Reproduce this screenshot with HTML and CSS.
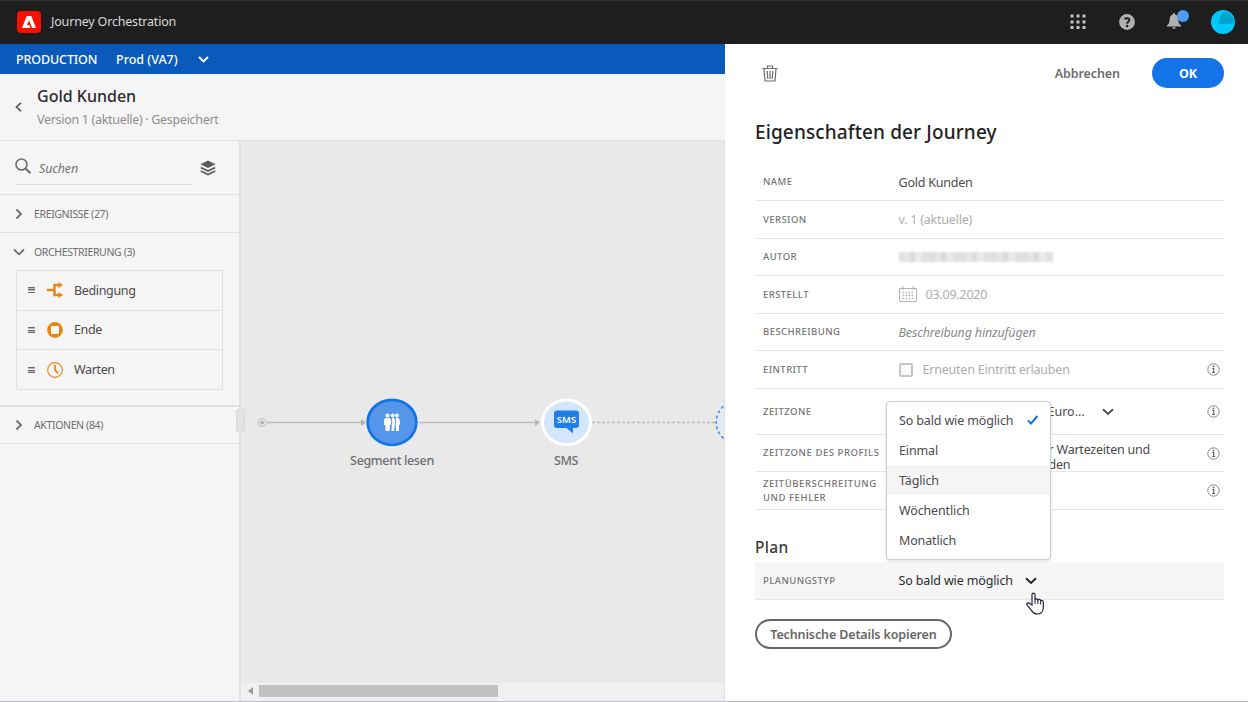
FILE: index.html
```html
<!DOCTYPE html>
<html lang="de">
<head>
<meta charset="utf-8">
<title>Journey Orchestration</title>
<link rel="stylesheet" href="styles.css">
</head>
<body>
<div class="app">
  <header class="topbar">
    <svg class="logo" width="24" height="22" viewBox="0 0 24 22"><rect width="24" height="22" rx="4" fill="#fa0f00"/><path d="M9.700 5h4.600l4.700 12h-3.900L12 9.200l-2 4.900h2.300l1.100 2.900H5z" fill="#fff"/></svg>
    <span class="product">Journey Orchestration</span>
    <div class="tools">
      <svg class="t-apps" width="16" height="16" viewBox="0 0 16 16" fill="#c4c4c4"><path d="M.5.5h3v3h-3zM6.500.5h3v3h-3zM12.500.5h3v3h-3zM.5 6.500h3v3h-3zM6.500 6.500h3v3h-3zM12.500 6.500h3v3h-3zM.5 12h3v3h-3zM6.500 12h3v3h-3zM12.500 12h3v3h-3z"/></svg>
      <svg class="t-help" width="16" height="16" viewBox="0 0 16 16"><circle cx="8" cy="8" r="7.900" fill="#b1b1b1"/><path d="M5.500 5.200C6.300 4 10.400 3.500 10.400 6c0 1.900-2.300 1.800-2.300 3.800" fill="none" stroke="#1e1e1e" stroke-width="1.900"/><circle cx="8.100" cy="12" r="1.200" fill="#1e1e1e"/></svg>
      <svg class="t-bell" width="24" height="22" viewBox="0 0 24 22"><path d="M1 17.500v-1.200c2.200-1.300 2.600-3 2.700-6.200C3.800 7.500 5 6 7 5.500V4.300h2v1.200c2 .5 3.200 2 3.300 4.600.1 3.200.5 4.900 2.700 6.200v1.200zM6.200 18.300h3.600c-.3 2-3.300 2-3.600 0z" fill="#b1b1b1"/><circle cx="17" cy="7" r="6" fill="#4b9cf5"/></svg>
      <svg class="t-avatar" width="24" height="24" viewBox="0 0 24 24"><circle cx="12" cy="12" r="12" fill="#00c8ff"/><path d="M13 1.800c6 .5 10.500 5.500 10.900 11.700L6.500 14.300C9.500 10.500 8.800 4.500 13 1.800z" fill="#00a5cd"/></svg>
    </div>
  </header>
  <div class="body">
    <div class="work">
      <div class="sandbox">
        <span class="env">PRODUCTION</span><span class="name">Prod (VA7)</span>
        <svg width="11" height="7" viewBox="0 0 11 7"><path d="M1 1l4.500 4.500L10 1" fill="none" stroke="#fff" stroke-width="1.900"/></svg>
      </div>
      <div class="titlebar">
        <svg class="back" width="7" height="10" viewBox="0 0 7 10"><path d="M6 .8L1.500 5 6 9.200" fill="none" stroke="#5a5a5a" stroke-width="1.700"/></svg>
        <div><h1>Gold Kunden</h1><p>Version 1 (aktuelle) · Gespeichert</p></div>
      </div>
      <div class="main">
        <aside class="palette">
          <div class="search">
            <div class="field">
              <svg width="17" height="17" viewBox="0 0 17 17" fill="none" stroke="#6e6e6e"><circle cx="6.500" cy="6.500" r="5.500" stroke-width="1.600"/><path d="M10.500 10.500l5 4.700" stroke-width="2"/></svg>
              <span>Suchen</span>
            </div>
            <svg class="layers" width="16" height="16" viewBox="0 0 16 16"><path d="M8 .5l7.500 3.700L8 8 .5 4.200z" fill="#5e5e5e"/><path d="M.8 7.500L8 11l7.200-3.500M.8 11L8 14.500 15.200 11" fill="none" stroke="#5e5e5e" stroke-width="1.800"/></svg>
          </div>
          <div class="group"><svg width="12" height="12" viewBox="0 0 12 12"><path d="M3.500 1.500L8 6l-4.500 4.500"/></svg><span>EREIGNISSE (27)</span></div>
          <div class="group open"><svg width="12" height="12" viewBox="0 0 12 12"><path d="M1 3.500L6 8.300l5-4.800"/></svg><span>ORCHESTRIERUNG (3)</span></div>
          <div class="items">
            <div class="item"><i class="grip"></i><svg width="16" height="16" viewBox="0 0 16 16"><path d="M0 8h6.500M12 3H7.500v10H12" fill="none" stroke="#e68619" stroke-width="2.500"/><path d="M11.500 0L16 3l-4.500 3zM11.500 10l4.500 3-4.500 3z" fill="#e68619"/></svg><span>Bedingung</span></div>
            <div class="item"><i class="grip"></i><svg width="16" height="16" viewBox="0 0 16 16"><circle cx="8" cy="8" r="7.900" fill="#e68619"/><rect x="4" y="4" width="8" height="8" rx="1" fill="#f5f5f5"/></svg><span>Ende</span></div>
            <div class="item"><i class="grip"></i><svg width="16" height="16" viewBox="0 0 16 16" fill="none" stroke="#e68619"><circle cx="8" cy="8" r="7.400" stroke-width="1.100"/><path d="M8 2.800V8l3 3.200" stroke-width="1.800"/></svg><span>Warten</span></div>
          </div>
          <div class="group actions"><svg width="12" height="12" viewBox="0 0 12 12"><path d="M3.500 1.500L8 6l-4.500 4.500"/></svg><span>AKTIONEN (84)</span></div>
          <i class="resize"></i>
        </aside>
        <section class="canvas">
          <div class="stage">
            <svg class="links" width="483" height="100" viewBox="0 0 483 100">
              <g fill="none" stroke="#bdbdbd"><circle cx="21" cy="50.500" r="4"/><path d="M26 50.500h97M178 50.500h119" stroke-width="1.500"/><path d="M351 50.500h124" stroke-width="1.500" stroke-dasharray="3 2"/></g>
              <g fill="#b3b3b3"><circle cx="21" cy="50.500" r="2"/><path d="M120 47l5 3.500-5 3.500zM294 47l5 3.500-5 3.500z"/></g>
              <ellipse cx="151" cy="50.300" rx="24.300" ry="22.500" fill="#5496e8" stroke="#1473e6" stroke-width="2.800"/>
              <g fill="#fff">
                <circle cx="156" cy="43.500" r="1.900"/><path d="M155 46h2.500q1.500 1 1.500 6.500h-1V59h-3z"/>
                <circle cx="151.700" cy="43.500" r="1.900"/><path d="M151 46h2q2 1 1.500 7l-1 6h-3z"/>
                <circle cx="146.500" cy="43.500" r="2"/><path d="M145 46h3.500q1.700.5 1.700 2v5h-1.400v6h-4.300v-6h-1.500v-5q0-1.500 2-2z"/>
              </g>
              <path d="M150 46.500q2 2 0 7l-1 5.500M154 46.500q2 2 0 7l-1 5.500" fill="none" stroke="#5496e8" stroke-width=".7"/>
              <ellipse cx="325.500" cy="50.300" rx="24" ry="22.300" fill="#d4e6fd" stroke="#fff" stroke-width="3"/>
              <path d="M316 38.500h19a3 3 0 0 1 3 3v11.500a3 3 0 0 1-3 3h-3v5.500l-6.500-5.500H316a3 3 0 0 1-3-3V41.500a3 3 0 0 1 3-3z" fill="#1f7eea"/>
              <text class="sms" x="325.500" y="51.300" text-anchor="middle">SMS</text>
              <ellipse cx="499.500" cy="50.300" rx="24.300" ry="22.500" fill="#e6ebf2" stroke="#3a8bea" stroke-width="1.500" stroke-dasharray="3 2.500"/>
            </svg>
            <span class="label segment">Segment lesen</span>
            <span class="label message">SMS</span>
          </div>
          <div class="scroll"><i class="arrow"></i><i class="thumb"></i></div>
        </section>
      </div>
    </div>
    <section class="panel">
      <div class="panel-actions">
        <svg width="16" height="17" viewBox="0 0 16 17" fill="none" stroke="#6e6e6e"><path d="M.5 3.500h15M5.500 3V1h5v2M2 4l1 12h10l1-12M5.200 6l.6 8M8 6v8M10.800 6l-.6 8" stroke-width="1.200"/></svg>
        <span class="cancel">Abbrechen</span><span class="ok">OK</span>
      </div>
      <h2>Eigenschaften der Journey</h2>
      <div class="props">
        <div class="row"><label>NAME</label><span class="val">Gold Kunden</span></div>
        <div class="row"><label>VERSION</label><span class="val muted">v. 1 (aktuelle)</span></div>
        <div class="row"><label>AUTOR</label><span class="redacted"></span></div>
        <div class="row"><label>ERSTELLT</label><svg class="cal" width="18" height="17" viewBox="0 0 18 17" fill="none" stroke="#b5b5b5"><path d="M.5 2.500h17v13H.5zM4 0v4M14 0v4"/><path d="M3.500 6.500h11M3.500 9.500h11M3.500 12.500h11" stroke-width="1.500" stroke-dasharray="1.500 1.500"/></svg><span class="val muted date">03.09.2020</span></div>
        <div class="row"><label>BESCHREIBUNG</label><span class="val placeholder">Beschreibung hinzufügen</span></div>
        <div class="row"><label>EINTRITT</label><i class="check"></i><span class="val muted reentry">Erneuten Eintritt erlauben</span><svg class="info" width="13" height="13" viewBox="0 0 13 13"><circle cx="6.500" cy="6.500" r="5.700" fill="none" stroke="#858585"/><path d="M5.200 5.500h1.500V9.500M5 9.500h3" fill="none" stroke="#666" stroke-width="1.200"/><circle cx="6.500" cy="3.500" r=".9" fill="#666"/></svg></div>
        <div class="row tall"><label>ZEITZONE</label><span class="val zone">Euro...</span><svg class="chev" width="12" height="8" viewBox="0 0 12 8"><path d="M1 1.200l5 4.800 5-4.800" fill="none" stroke="#4b4b4b" stroke-width="1.900"/></svg><svg class="info" width="13" height="13" viewBox="0 0 13 13"><circle cx="6.500" cy="6.500" r="5.700" fill="none" stroke="#858585"/><path d="M5.200 5.500h1.500V9.500M5 9.500h3" fill="none" stroke="#666" stroke-width="1.200"/><circle cx="6.500" cy="3.500" r=".9" fill="#666"/></svg></div>
        <div class="row"><label class="wide">ZEITZONE DES PROFILS</label><span class="val wait">r Wartezeiten und<br>den</span><svg class="info" width="13" height="13" viewBox="0 0 13 13"><circle cx="6.500" cy="6.500" r="5.700" fill="none" stroke="#858585"/><path d="M5.200 5.500h1.500V9.500M5 9.500h3" fill="none" stroke="#666" stroke-width="1.200"/><circle cx="6.500" cy="3.500" r=".9" fill="#666"/></svg></div>
        <div class="row"><label class="wide">ZEITÜBERSCHREITUNG<br>UND FEHLER</label><svg class="info" width="13" height="13" viewBox="0 0 13 13"><circle cx="6.500" cy="6.500" r="5.700" fill="none" stroke="#858585"/><path d="M5.200 5.500h1.500V9.500M5 9.500h3" fill="none" stroke="#666" stroke-width="1.200"/><circle cx="6.500" cy="3.500" r=".9" fill="#666"/></svg></div>
      </div>
      <h3>Plan</h3>
      <div class="row plan"><label>PLANUNGSTYP</label><span class="val dark">So bald wie möglich</span><svg class="chev" width="12" height="8" viewBox="0 0 12 8"><path d="M1 1.200l5 4.800 5-4.800" fill="none" stroke="#222" stroke-width="1.900"/></svg></div>
      <div class="copy">Technische Details kopieren</div>
      <div class="menu">
        <div class="opt"><span>So bald wie möglich</span><svg width="12" height="10" viewBox="0 0 12 10"><path d="M1 5.500l3 3L10.500 1" fill="none" stroke="#1473e6" stroke-width="2"/></svg></div>
        <div class="opt">Einmal</div><div class="opt hover">Täglich</div><div class="opt">Wöchentlich</div><div class="opt">Monatlich</div>
      </div>
      <svg class="cursor" width="19" height="23" viewBox="0 0 19 23"><path d="M6 13V2.800C6 .5 9 .5 9 2.800V8c.2-1.600 2.700-1.500 2.900.1.600-1.200 2.700-.8 2.800.8.800-.9 2.600-.5 2.600 1.200v5.400c0 4-2.500 6.500-6 6.500-3.200 0-4.800-1.800-5.800-3.600L1 13c-.8-1.500 1.300-3 2.700-1.500z" fill="#fff" stroke="#23233b" stroke-width="1.200"/><path d="M9 8v4M11.900 8.200V12M14.700 9v3.500" fill="none" stroke="#23233b"/></svg>
    </section>
  </div>
</div>
</body>
</html>
```
FILE: styles.css
```css
* { box-sizing: border-box; }
body { margin: 0; font-family: "Noto Sans", "Open Sans", sans-serif; font-size: 12.5px; color: #4b4b4b; }
svg { display: block; flex: none; }
h1, h2, h3, p { margin: 0; }
.app { width: 1248px; height: 702px; display: flex; flex-direction: column; overflow: hidden; border-bottom: 1px solid #b9bdc9; }

.topbar { height: 44px; flex: none; display: flex; align-items: center; padding: 0 13px 2px 17px; background: #1e1e1e; border-top: 1px solid #303030; }
.product { margin-left: 10px; color: #d8d8d8; letter-spacing: -.18px; }
.tools { margin-left: auto; display: flex; align-items: center; }
.t-help { margin-left: 33px; }
.t-bell { margin-left: 31px; margin-top: -3px; }
.t-avatar { margin-left: 21px; }

.body { flex: 1; display: flex; min-height: 0; }
.work { width: 724.500px; flex: none; display: flex; flex-direction: column; background: #f5f5f5; }
.sandbox { height: 30px; flex: none; display: flex; align-items: center; padding-left: 16px; background: #095aba; color: #fff; font-weight: 500; }
.env { width: 100px; letter-spacing: -.12px; }
.name { width: 82px; letter-spacing: 0; }
.titlebar { height: 67px; flex: none; display: flex; padding: 11px 0 0 15px; border-bottom: 1px solid #e1e1e1; }
.back { margin: 17px 15px 0 0; }
h1 { font-size: 16px; line-height: 22px; font-weight: 500; color: #2c2c2c; }
.titlebar p { line-height: 18px; margin-top: 4px; color: #8e8e8e; letter-spacing: -.31px; }

.main { flex: 1; display: flex; min-height: 0; }
.palette { position: relative; width: 241px; border-right: 2px solid #e1e1e1; }
.search { height: 54px; display: flex; padding-left: 15px; border-bottom: 1px solid #e1e1e1; }
.field { width: 177px; height: 44px; display: flex; padding-top: 17px; border-bottom: 1px solid #dcdcdc; }
.field span { margin-left: 7px; line-height: 22px; font-style: italic; color: #747474; letter-spacing: -.15px; }
.layers { margin: 19px 0 0 8px; }
.group { height: 38px; display: flex; align-items: center; padding-left: 13px; border-bottom: 1px solid #e1e1e1; font-size: 10.500px; color: #6e6e6e; letter-spacing: -.36px; }
.group svg { margin-right: 9px; fill: none; stroke: #6e6e6e; stroke-width: 1.800; }
.group.open { border-bottom: 0; height: 37px; }
.items { width: 207px; margin: 0 0 15px 16px; border: 1px solid #e1e1e1; }
.item { height: 39.500px; display: flex; align-items: center; padding-left: 11px; border-bottom: 1px solid #e1e1e1; }
.item:last-child { height: 39px; border-bottom: 0; }
.item span { margin-left: 11px; letter-spacing: -.35px; }
.grip { width: 7px; height: 6px; margin-right: 12px; background: repeating-linear-gradient(#6a6a6a 0 1px, #bbb 1px 2px, #f5f5f5 2px 2.500px); }
.group.actions { border-top: 2px solid #e1e1e1; height: 39px; }
.resize { position: absolute; left: 236px; top: 268px; width: 9px; height: 23px; border: 1px solid #d9d9d9; background: #e3e3e3; border-radius: 2px; }

.canvas { flex: 1; display: flex; flex-direction: column; background: #e9e9e9; border-right: 1px solid #dedede; overflow: hidden; }
.stage { position: relative; flex: 1; }
.links { position: absolute; left: 0; top: 231px; }
.sms { font: 600 9.500px "Noto Sans", sans-serif; fill: #fff; }
.label { position: absolute; top: 311px; width: 120px; text-align: center; line-height: 18px; color: #6e6e6e; font-weight: 500; letter-spacing: -.35px; }
.segment { left: 91px; }
.message { left: 265px; }
.scroll { height: 18px; display: flex; align-items: center; padding: 0 0 2px 7px; background: #f0f0f0; }
.arrow { border: 4px solid transparent; border-right: 5px solid #9a9a9a; border-left: 0; }
.thumb { width: 239px; height: 12px; margin-left: 6px; background: #c1c1c1; }

.panel { position: relative; flex: 1; padding: 0 24px 0 30.500px; background: #fff; }
.panel-actions { height: 58px; display: flex; align-items: center; padding-left: 7px; font-weight: 600; }
.cancel { margin-left: auto; color: #6e6e6e; letter-spacing: -.08px; }
.ok { width: 72px; height: 30px; margin-left: 32px; border-radius: 15px; background: #1473e6; color: #fff; line-height: 31px; text-align: center; font-weight: 700; }
h2 { height: 61.500px; padding-top: 15px; font-size: 19px; line-height: 30px; font-weight: 500; color: #222; letter-spacing: .12px; }
.row { position: relative; height: 37.500px; display: flex; align-items: center; padding: 1px 4px 0 8px; border-bottom: 1px solid #e6e6e6; }
.row.tall { height: 46px; }
.row label { width: 135.500px; flex: none; font-size: 9.500px; line-height: 14px; font-weight: 500; color: #747474; letter-spacing: .44px; white-space: nowrap; }
.row label.wide { letter-spacing: .56px; }
.val { letter-spacing: -.22px; white-space: nowrap; }
.dark { color: #2c2c2c; letter-spacing: -.14px; }
.muted { color: #adadad; }
.placeholder { color: #8a8a8a; font-style: italic; letter-spacing: -.16px; }
.redacted { width: 154px; height: 10px; background: repeating-linear-gradient(90deg, #dedede 0 5px, #e6e6e6 5px 11px, #dadada 11px 16px, #eaeaea 16px 23px, #e0e0e0 23px 31px); filter: blur(1px); }
.date { margin-left: 9px; }
.check { width: 14px; height: 14px; border: 2px solid #c6c6c6; border-radius: 2px; background: #fafafa; }
.reentry { margin-left: 10px; }
.info { margin-left: auto; }
.zone { width: 54px; margin-left: 149px; letter-spacing: 0; }
.wait { margin-left: 150px; padding-top: 8px; line-height: 15px; }
h3 { height: 52.500px; padding-top: 25px; font-size: 15.500px; line-height: 25px; font-weight: 500; color: #3b3b3b; letter-spacing: .3px; }
.plan { background: #f6f6f6; }
.plan .chev { margin-left: 12px; }
.copy { width: 197px; height: 30px; margin-top: 19px; border: 2px solid #666; border-radius: 15px; line-height: 27px; text-align: center; font-weight: 600; color: #666; letter-spacing: -.13px; }
.menu { position: absolute; left: 161px; top: 357px; width: 165px; height: 159px; padding-top: 3px; background: #fff; border: 1px solid #cfcfcf; border-radius: 4px; box-shadow: 0 1px 3px rgba(0, 0, 0, .14); }
.opt { height: 30px; display: flex; align-items: center; padding: 0 11px 0 12.500px; letter-spacing: -.14px; white-space: nowrap; }
.opt svg { margin-left: auto; }
.opt.hover { background: #f5f5f5; }
.cursor { position: absolute; left: 301px; top: 548px; }
```
